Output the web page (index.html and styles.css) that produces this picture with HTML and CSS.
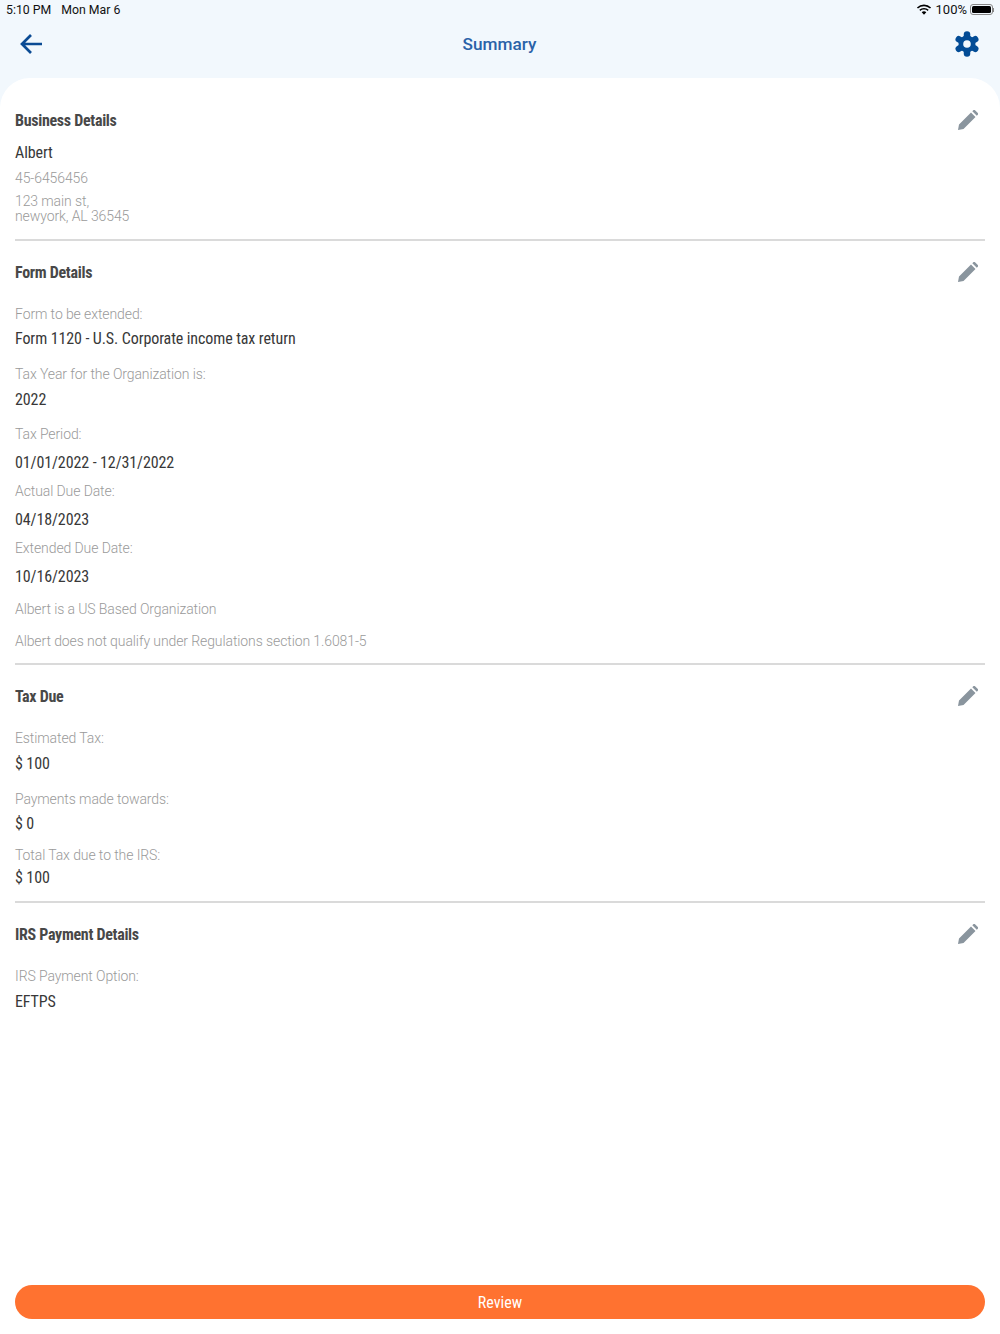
FILE: index.html
```html
<!DOCTYPE html>
<html lang="en">

<head>
    <meta charset="UTF-8">
    <meta name="viewport" content="width=device-width, initial-scale=1.0">
    <title>Summary</title>

    <link rel="stylesheet" href="styles.css">
</head>

<body>
    <div class="statusbar">
        <div class="status-left">
            <span>5:10 PM</span>
            <span>Mon Mar 6</span>
        </div>
        <div class="status-right">
            <svg class="wifi" width="16" height="12" viewBox="0 0 16 12">
                <path d="M8 2.200c2.300 0 4.400.9 6 2.400l1.100-1.200A10.300 10.300 0 0 0 8 .5 10.300 10.300 0 0 0 .9 3.400L2 4.600a8.700 8.700 0 0 1 6-2.400z" fill="#000" />
                <path d="M8 5.600c1.400 0 2.600.5 3.600 1.400l1.100-1.200A6.900 6.900 0 0 0 8 3.900a6.900 6.900 0 0 0-4.700 1.900L4.400 7c1-.9 2.200-1.400 3.600-1.400z" fill="#000" />
                <path d="M8 7.300c-.9 0-1.700.3-2.300.9L8 10.800l2.300-2.600c-.6-.6-1.400-.9-2.300-.9z" fill="#000" />
            </svg>
            <span>100%</span>
            <span class="battery"><span class="battery-fill"></span></span>
            <span class="battery-cap"></span>
        </div>
    </div>

    <header class="topbar">
        <svg class="back" width="28" height="24" viewBox="0 0 28 24">
            <path d="M24 12H4M13 3l-9 9 9 9" fill="none" stroke="#0b4b94" stroke-width="2.700" />
        </svg>
        <h1>Summary</h1>
        <svg class="gear" width="28" height="28" viewBox="0 0 28 28">
            <g stroke="#034c96" stroke-width="6.500" stroke-linecap="round">
                <path d="M14 4.500V23.500" />
                <path d="M14 4.500V23.500" transform="rotate(60 14 14)" />
                <path d="M14 4.500V23.500" transform="rotate(120 14 14)" />
            </g>
            <circle cx="14" cy="14" r="8.500" fill="#034c96" />
            <circle cx="14" cy="14" r="3.800" fill="#f2f8fd" />
        </svg>
    </header>

    <main class="sheet">
        <section class="block block-business">
            <div class="block-head">
                <h2>Business Details</h2>
                <svg class="edit" width="20" height="20" viewBox="0 0 20 20"><path fill="#8a959e" d="M0 20l1-5.500L13 2.500 17.500 7 5.500 19zM14.300 1.200l1-1a1.200 1.200 0 0 1 1.700 0l2.800 2.800a1.200 1.200 0 0 1 0 1.700l-1 1z" /></svg>
            </div>
            <p class="value name">Albert</p>
            <p class="label ein">45-6456456</p>
            <p class="label address">123 main st,<br>newyork, AL 36545</p>
        </section>

        <section class="block block-form">
            <div class="block-head">
                <h2>Form Details</h2>
                <svg class="edit" width="20" height="20" viewBox="0 0 20 20"><path fill="#8a959e" d="M0 20l1-5.500L13 2.500 17.500 7 5.500 19zM14.300 1.200l1-1a1.200 1.200 0 0 1 1.700 0l2.800 2.800a1.200 1.200 0 0 1 0 1.700l-1 1z" /></svg>
            </div>
            <p class="label first">Form to be extended:</p>
            <p class="value">Form 1120 - U.S. Corporate income tax return</p>
            <p class="label gap-l">Tax Year for the Organization is:</p>
            <p class="value gap-s">2022</p>
            <p class="label gap-k">Tax Period:</p>
            <p class="value gap-m">01/01/2022 - 12/31/2022</p>
            <p class="label gap-xs">Actual Due Date:</p>
            <p class="value gap-m">04/18/2023</p>
            <p class="label gap-xs">Extended Due Date:</p>
            <p class="value gap-m">10/16/2023</p>
            <p class="label gap-n">Albert is a US Based Organization</p>
            <p class="label gap-o">Albert does not qualify under Regulations section 1.6081-5</p>
        </section>

        <section class="block block-tax">
            <div class="block-head">
                <h2>Tax Due</h2>
                <svg class="edit" width="20" height="20" viewBox="0 0 20 20"><path fill="#8a959e" d="M0 20l1-5.500L13 2.500 17.500 7 5.500 19zM14.300 1.200l1-1a1.200 1.200 0 0 1 1.700 0l2.800 2.800a1.200 1.200 0 0 1 0 1.700l-1 1z" /></svg>
            </div>
            <p class="label first">Estimated Tax:</p>
            <p class="value gap-s">$ 100</p>
            <p class="label gap-l">Payments made towards:</p>
            <p class="value">$ 0</p>
            <p class="label gap-p">Total Tax due to the IRS:</p>
            <p class="value gap-t">$ 100</p>
        </section>

        <section class="block block-irs">
            <div class="block-head">
                <h2>IRS Payment Details</h2>
                <svg class="edit" width="20" height="20" viewBox="0 0 20 20"><path fill="#8a959e" d="M0 20l1-5.500L13 2.500 17.500 7 5.500 19zM14.300 1.200l1-1a1.200 1.200 0 0 1 1.700 0l2.800 2.800a1.200 1.200 0 0 1 0 1.700l-1 1z" /></svg>
            </div>
            <p class="label first">IRS Payment Option:</p>
            <p class="value gap-s">EFTPS</p>
        </section>

        <button class="review">Review</button>
    </main>
</body>

</html>
```

FILE: styles.css
```css
* {
    box-sizing: border-box;
    margin: 0;
    padding: 0;
}

html,
body {
    height: 100%;
}

body {
    display: flex;
    flex-direction: column;
    height: 1334px;
    overflow: hidden;
    background-color: #f2f8fd;
    font-family: Roboto, "Liberation Sans", sans-serif;
}

/* status bar */
.statusbar {
    display: flex;
    justify-content: space-between;
    align-items: center;
    height: 20px;
    padding: 0 6px 1px;
    font-size: 13px;
    color: #111;
}

.status-left {
    display: flex;
    gap: 10px;
    font-size: 12.300px;
}

.status-right {
    display: flex;
    align-items: center;
    gap: 3px;
}

.wifi {
    margin-right: 1px;
}

.battery {
    display: block;
    width: 23px;
    height: 11px;
    padding: 1px;
    border: 1px solid #888;
    border-radius: 3px;
}

.battery-fill {
    display: block;
    height: 100%;
    background-color: #000;
    border-radius: 1.500px;
}

.battery-cap {
    width: 1px;
    height: 4px;
    margin-left: -3px;
    background-color: #888;
}

/* top bar */
.topbar {
    display: flex;
    justify-content: space-between;
    align-items: center;
    height: 58px;
    padding: 0 19px 10px 18px;
}

.topbar h1 {
    font-size: 17.200px;
    font-weight: 500;
    color: #2a62a8;
}

/* white sheet */
.sheet {
    display: flex;
    flex-direction: column;
    flex: 1;
    padding: 0 15px 15px;
    background-color: #fff;
    border-radius: 30px 30px 0 0;
    font-stretch: 75%;
}

.block {
    border-bottom: 2px solid #dadada;
}

.block-business {
    height: 163px;
    padding-top: 30px;
}

.block-form {
    height: 424px;
    padding-top: 19px;
}

.block-tax {
    height: 238px;
    padding-top: 19px;
}

.block-irs {
    border-bottom: 0;
    padding-top: 19px;
}

.block-head {
    display: flex;
    justify-content: space-between;
    align-items: center;
    height: 24px;
    padding-right: 7px;
}

.block-head h2 {
    font-size: 16px;
    font-weight: 700;
    letter-spacing: -0.3px;
    color: #484848;
}

.label {
    font-size: 14px;
    font-stretch: 100%;
    font-weight: 300;
    letter-spacing: -0.1px;
    line-height: 16px;
    color: #9a9a9a;
}

.value {
    font-size: 16px;
    font-weight: 400;
    letter-spacing: -0.1px;
    line-height: 20px;
    color: #383838;
    margin-top: 7px;
}

.name { margin-top: 11px; }
.ein { margin-top: 7px; }
.address { margin-top: 8px; line-height: 15px; }
.first { margin-top: 22px; }
.gap-l { margin-top: 17px; }
.gap-k { margin-top: 16px; }
.gap-s { margin-top: 8px; }
.gap-m { margin-top: 11px; }
.gap-xs { margin-top: 10px; }
.gap-n { margin-top: 14px; }
.gap-o { margin-top: 16px; }
.gap-p { margin-top: 13px; }
.gap-t { margin-top: 5px; }

.review {
    height: 34px;
    margin-top: auto;
    border: 0;
    border-radius: 17px;
    background-color: #ff7230;
    color: #fff;
    font-family: inherit;
    font-stretch: 75%;
    font-size: 16px;
}
```
